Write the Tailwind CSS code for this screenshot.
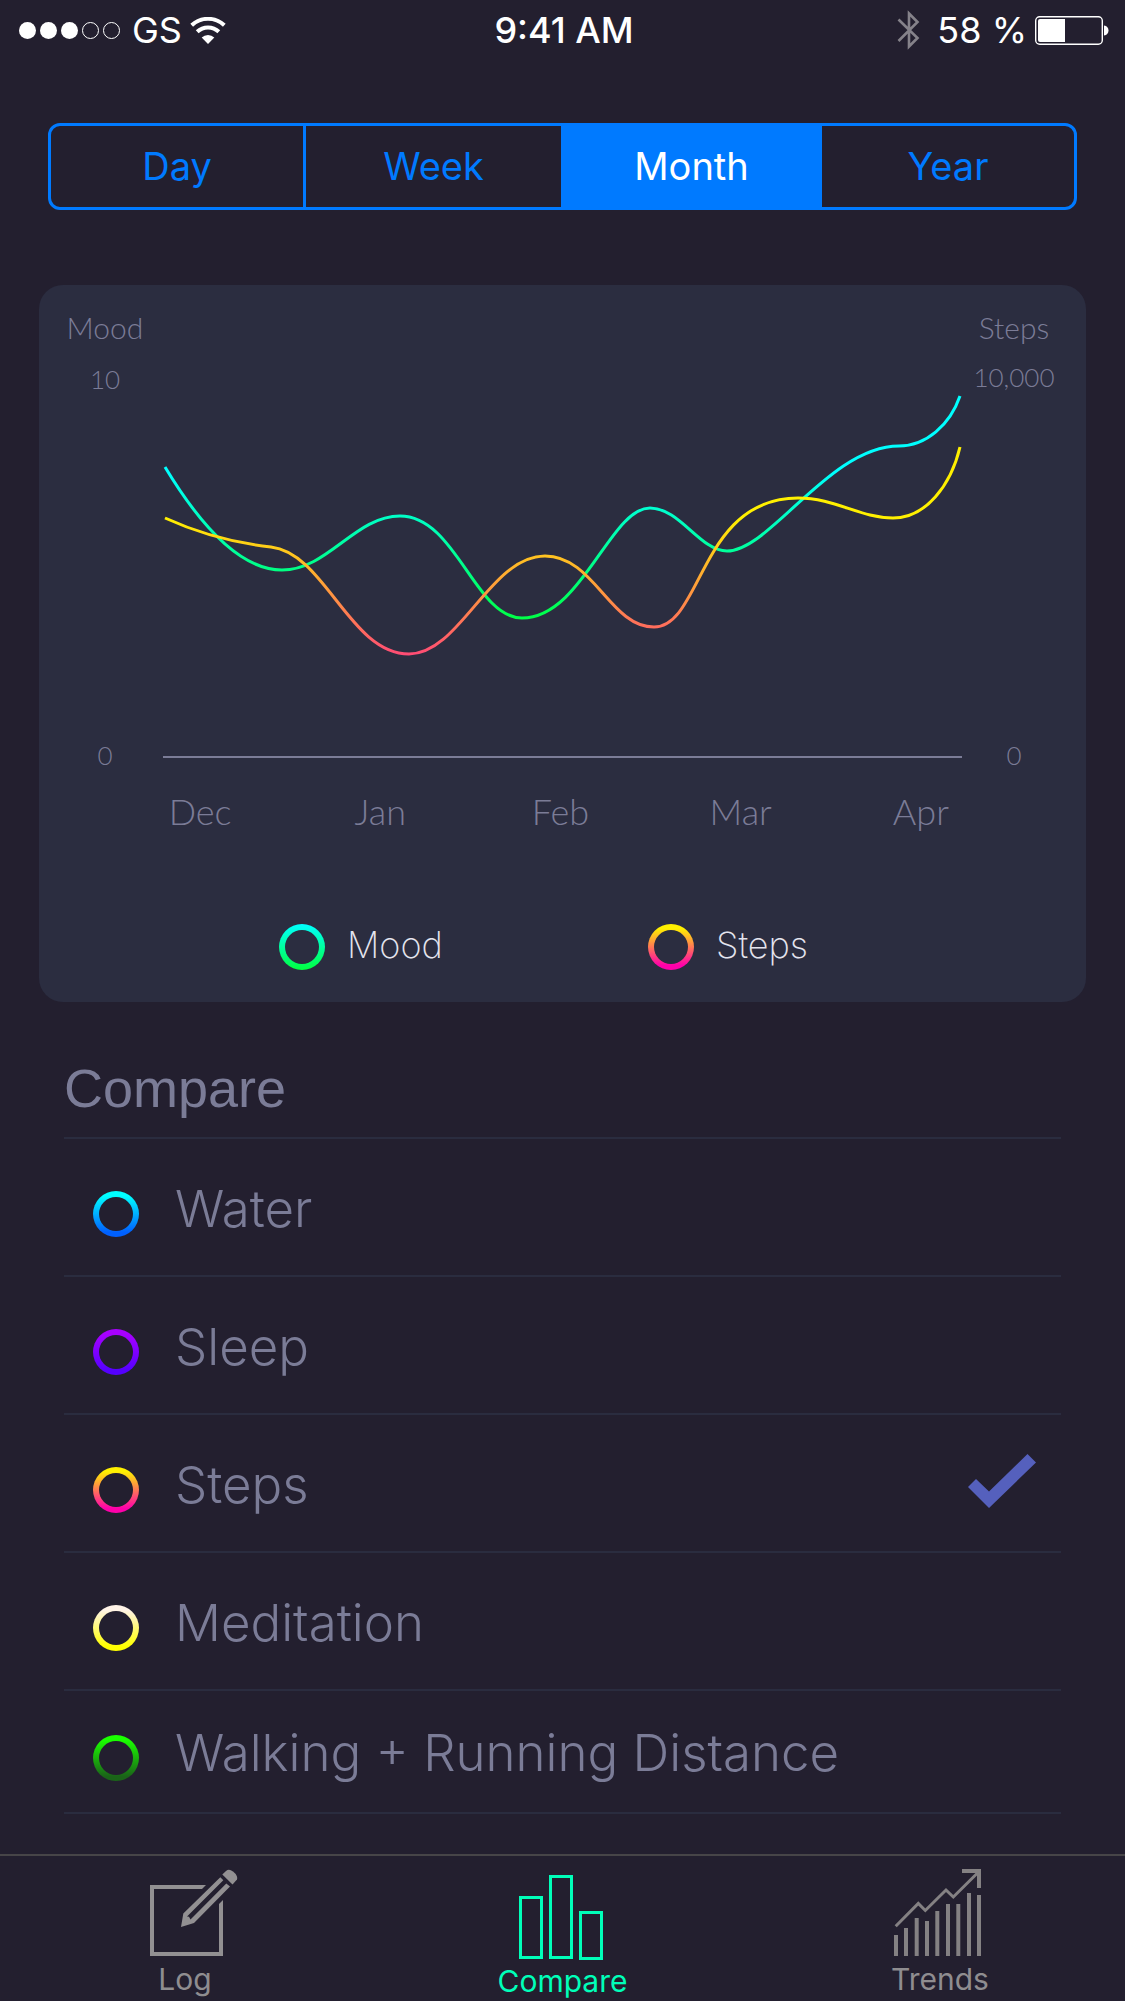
<!DOCTYPE html>
<html lang="en">
<head>
<meta charset="utf-8">
<meta name="viewport" content="width=device-width, initial-scale=1">
<title>Compare</title>
<script src="https://cdn.jsdelivr.net/npm/@tailwindcss/browser@4"></script>
</head>
<body class="flex min-h-screen flex-col bg-[#231f2f] font-['Inter',sans-serif] text-[#7b7c97]">

<!-- Status bar -->
<header class="grid h-[60px] grid-cols-3 items-center pl-[19px] pr-4 text-[36px] leading-[60px] text-white">
  <div class="flex items-center">
    <div class="flex gap-1">
      <span class="size-[17px] rounded-full bg-white"></span>
      <span class="size-[17px] rounded-full bg-white"></span>
      <span class="size-[17px] rounded-full bg-white"></span>
      <span class="size-[17px] rounded-full border border-white"></span>
      <span class="size-[17px] rounded-full border border-white"></span>
    </div>
    <span class="ml-3">GS</span>
    <svg class="ml-2 h-[27px] w-9" viewBox="0 0 36 27" fill="none" stroke="#fff" stroke-width="4" aria-label="Wi-Fi">
      <path d="M1.700 8.200A24 24 0 0 1 34.300 8.200"/>
      <path d="M7.200 14.800A15.500 15.500 0 0 1 28.800 14.800"/>
      <path d="M11.700 20.500A9 9 0 0 1 24.300 20.500L18 27Z" fill="#fff" stroke="none"/>
    </svg>
  </div>
  <div class="text-center font-medium">9:41 AM</div>
  <div class="flex items-center justify-end">
    <svg class="h-10 w-6" viewBox="0 0 24 40" fill="none" stroke="#85828a" stroke-width="2.600" aria-label="Bluetooth">
      <path d="M1.500 9.500L20.500 28L12 36.500V3.500L20.500 12L1.500 31"/>
    </svg>
    <span class="ml-4">58 %</span>
    <svg class="ml-2 h-[29px] w-[74px]" viewBox="0 0 74 29" aria-label="Battery">
      <rect x=".7" y=".7" width="66.600" height="27.600" rx="4" fill="none" stroke="#fff" stroke-width="1.400"/>
      <path d="M3 5a2 2 0 0 1 2-2H30V26H5a2 2 0 0 1-2-2Z" fill="#fff"/>
      <path d="M69 9.500C75 10 75 19 69 19.500Z" fill="#fff"/>
    </svg>
  </div>
</header>

<main class="flex flex-1 flex-col">
  <!-- Period switch -->
  <div class="mx-12 mt-[63px] grid h-[87px] grid-cols-[255fr_258fr_258fr_252fr] divide-x-[3px] divide-[#007aff] overflow-hidden rounded-xl border-[3px] border-[#007aff] text-[38px] text-[#007aff]" role="group" aria-label="Period">
    <button type="button" aria-pressed="false">Day</button>
    <button type="button" aria-pressed="false">Week</button>
    <button type="button" aria-pressed="true" class="bg-[#007aff] text-white">Month</button>
    <button type="button" aria-pressed="false">Year</button>
  </div>

  <!-- Chart card -->
  <section class="mx-[39px] mt-[75px] h-[717px] rounded-3xl bg-[#2b2d40] font-['Lato',sans-serif] font-light" aria-label="Mood and steps by month">
    <div class="grid grid-cols-[84px_1fr_104px] pl-6 pr-5 pt-[22px] text-center">
      <div class="flex h-[468px] flex-col">
        <span class="text-[30px] leading-10">Mood</span>
        <span class="mt-3 text-[26px] leading-10">10</span>
        <span class="mt-auto text-[26px] leading-10">0</span>
      </div>
      <svg class="ml-4 h-[468px] w-[calc(100%-16px)]" viewBox="163 307 799 468" preserveAspectRatio="none" fill="none" stroke-width="3" aria-hidden="true">
        <defs>
          <linearGradient id="mood" gradientUnits="userSpaceOnUse" x1="0" y1="470" x2="0" y2="618"><stop stop-color="#00ffff"/><stop offset="1" stop-color="#00ff48"/></linearGradient>
          <linearGradient id="steps" gradientUnits="userSpaceOnUse" x1="0" y1="518" x2="0" y2="718"><stop stop-color="#fff000"/><stop offset="1" stop-color="#ff00aa"/></linearGradient>
        </defs>
        <path stroke="url(#mood)" d="M165 467C200 525 240 570 282 570C328 570 355 516 400 516C456 516 475 618 522 618C582 618 610 508 650 508C680 508 700 551 727 551C770 551 830 446 899 446C926 446 950 425 960 396"/>
        <path stroke="url(#steps)" d="M165 518C200 534 235 543 271 547C325 553 350 654 409 654C460 654 490 556 545 556C594 556 610 627 654 627C702 627 700 498 798 498C835 498 860 518 893 518C926 518 951 485 960 447"/>
        <path stroke="#7b7c97" stroke-width="2" d="M163 757H962"/>
      </svg>
      <div class="flex h-[468px] flex-col">
        <span class="text-[30px] leading-10">Steps</span>
        <span class="mt-2.5 text-[26px] leading-10">10,000</span>
        <span class="mt-auto text-[26px] leading-10">0</span>
      </div>
    </div>
    <div class="mt-3 grid grid-cols-5 pl-[71px] pr-[75px] text-center text-[36px] leading-[48px]">
      <span>Dec</span><span>Jan</span><span>Feb</span><span>Mar</span><span>Apr</span>
    </div>
    <div class="mt-[85px] grid grid-cols-2 pl-[240px] pr-[69px] font-['Inter',sans-serif] text-[36px] font-extralight leading-[48px] text-[#e4e4ee]">
      <div class="flex items-center gap-[22px]"><span class="mt-1 size-[46px] rounded-full bg-linear-to-b/srgb from-[#00ffff] to-[#00ff40] p-1.5"><span class="block size-full rounded-full bg-[#2b2d40]"></span></span>Mood</div>
      <div class="flex items-center gap-[22px]"><span class="mt-1 size-[46px] rounded-full bg-linear-to-b/srgb from-[#fff000] from-10% to-[#ff00aa] to-90% p-1.5"><span class="block size-full rounded-full bg-[#2b2d40]"></span></span>Steps</div>
    </div>
  </section>

  <!-- Metric to compare against -->
  <section class="mx-16 mt-[50px] font-light">
    <h2 class="border-b-2 border-[#2a2c3f] pb-[13px] font-['Liberation_Sans',sans-serif] text-[54px] font-normal leading-[72px]">Compare</h2>
    <div class="text-[51px]" role="radiogroup" aria-label="Compare with">
      <label class="flex h-[138px] items-center border-b-2 border-[#2a2c3f] pl-[29px]">
        <input type="radio" name="metric" class="sr-only">
        <span class="mt-3.5 size-[46px] rounded-full bg-linear-to-b/srgb from-[#00ffff] from-10% to-[#0060ff] to-90% p-1.5"><span class="block size-full rounded-full bg-[#231f2f]"></span></span>
        <span class="ml-9 mt-1">Water</span>
      </label>
      <label class="flex h-[138px] items-center border-b-2 border-[#2a2c3f] pl-[29px]">
        <input type="radio" name="metric" class="sr-only">
        <span class="mt-3.5 size-[46px] rounded-full bg-linear-to-b/srgb from-[#a800ff] from-10% to-[#5500ff] to-90% p-1.5"><span class="block size-full rounded-full bg-[#231f2f]"></span></span>
        <span class="ml-9 mt-1">Sleep</span>
      </label>
      <label class="flex h-[138px] items-center border-b-2 border-[#2a2c3f] pl-[29px] pr-[25px]">
        <input type="radio" name="metric" class="sr-only" checked>
        <span class="mt-3.5 size-[46px] rounded-full bg-linear-to-b/srgb from-[#fff000] from-10% to-[#ff00aa] to-90% p-1.5"><span class="block size-full rounded-full bg-[#231f2f]"></span></span>
        <span class="ml-9 mt-1">Steps</span>
        <svg class="mb-1 ml-auto h-[54px] w-[68px]" viewBox="0 0 68 54" fill="#5560bd" aria-hidden="true"><path d="M0 33L8 25L21 37.500L59.500 0L68 8.500L21 54Z"/></svg>
      </label>
      <label class="flex h-[138px] items-center border-b-2 border-[#2a2c3f] pl-[29px]">
        <input type="radio" name="metric" class="sr-only">
        <span class="mt-3.5 size-[46px] rounded-full bg-linear-to-b/srgb from-[#fff3e8] from-10% to-[#ffff00] to-90% p-1.5"><span class="block size-full rounded-full bg-[#231f2f]"></span></span>
        <span class="ml-9 mt-1">Meditation</span>
      </label>
      <label class="flex h-[123px] items-center border-b-2 border-[#2a2c3f] pl-[29px]">
        <input type="radio" name="metric" class="sr-only">
        <span class="mt-3 size-[46px] rounded-full bg-linear-to-b/srgb from-[#1aff00] from-10% to-[#1a6418] to-90% p-1.5"><span class="block size-full rounded-full bg-[#231f2f]"></span></span>
        <span class="ml-9 mt-1">Walking + Running Distance</span>
      </label>
    </div>
  </section>
</main>

<!-- Tab bar -->
<nav class="flex h-[147px] justify-between border-t-2 border-[#474548] px-[120px] pt-3 text-[30px] leading-9 text-[#8f8d90]" aria-label="Tabs">
  <a href="#log" class="flex w-[130px] flex-col items-center gap-px">
    <svg class="h-[92px] w-[130px]" viewBox="0 0 130 92" fill="#929092" aria-hidden="true">
      <path d="M30 17H86L82 21H34V84H99V36L103 32V88H30Z"/>
      <path d="M102.300 6.500L106 3Q109 .5 113 3.500Q118 7.500 117 11.500L112.500 16.500Z"/>
      <path d="M100.300 9.300L63.300 45.500L61 59L74 55L110 18.500L106.300 15.500L70.500 51.500L69 48.800L67 48.500L103.300 12.300Z"/>
    </svg>
    Log
  </a>
  <a href="#compare" class="flex w-[130px] flex-col items-center gap-[3px] text-[#00ffb9]" aria-current="page">
    <svg class="h-[92px] w-[130px]" viewBox="0 0 130 92" fill="none" stroke="#00ffb9" stroke-width="3" aria-hidden="true">
      <rect x="22.500" y="29.500" width="21" height="60"/><rect x="52.500" y="8.500" width="21" height="81"/><rect x="82.500" y="44.500" width="21" height="46"/>
    </svg>
    Compare
  </a>
  <a href="#trends" class="flex w-[130px] flex-col items-center gap-px">
    <svg class="h-[92px] w-[130px]" viewBox="0 0 130 92" fill="none" stroke="#848183" stroke-width="4" aria-hidden="true">
      <path d="M21 67V88M31 60V88M41.700 50V88M52 53V88M62.300 43V88M73 36V88M83.300 36V88M94 25V88M104 27V88"/>
      <path stroke-width="3" d="M20.700 58.300L43.300 35.500L50.300 42.500L71 22L78.300 29L104 3.500"/>
      <path d="M87 3H104V20"/>
    </svg>
    Trends
  </a>
</nav>
</body>
</html>
